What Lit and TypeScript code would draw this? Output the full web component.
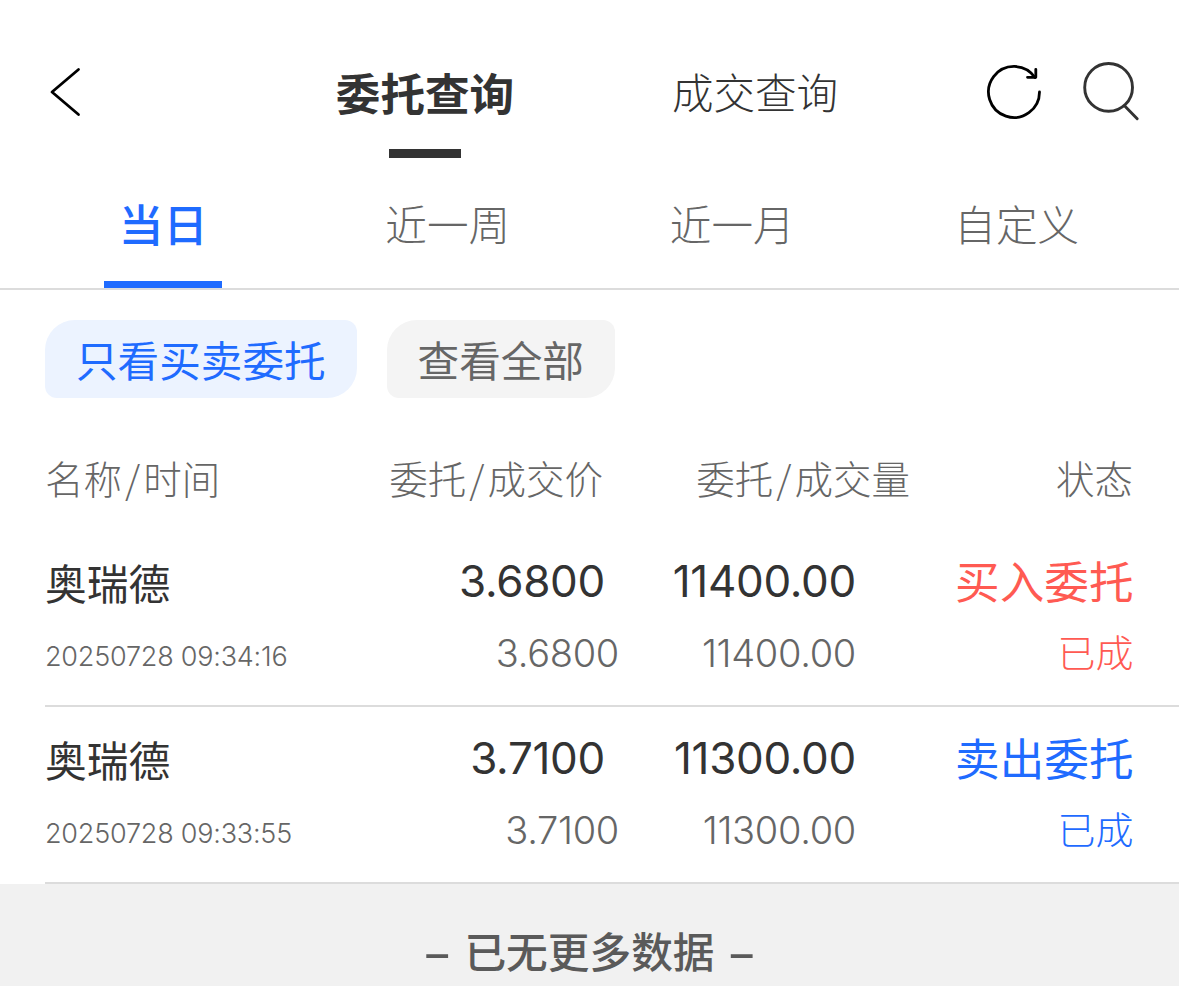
import { css, html, LitElement } from 'lit';
import { customElement, property, state } from 'lit/decorators.js';
import { classMap } from 'lit/directives/class-map.js';

interface Order {
  name: string;
  time: string;
  price: string;
  dealPrice: string;
  volume: string;
  dealVolume: string;
  side: 'buy' | 'sell';
  action: string;
  status: string;
}

const orders: Order[] = [
  {
    name: '奥瑞德',
    time: '20250728 09:34:16',
    price: '3.6800',
    dealPrice: '3.6800',
    volume: '11400.00',
    dealVolume: '11400.00',
    side: 'buy',
    action: '买入委托',
    status: '已成',
  },
  {
    name: '奥瑞德',
    time: '20250728 09:33:55',
    price: '3.7100',
    dealPrice: '3.7100',
    volume: '11300.00',
    dealVolume: '11300.00',
    side: 'sell',
    action: '卖出委托',
    status: '已成',
  },
];

@customElement('order-row')
export class OrderRow extends LitElement {
  @property({attribute: false}) order!: Order;

  static styles = css`
    :host {
      display: block;
      flex: none;
      box-sizing: border-box;
      height: 177px;
      margin-left: 45px;
      padding-top: 18px;
      border-bottom: 2px solid #dcdcdc;
      color: #333;
    }
    .line {
      display: grid;
      grid-template-columns: 328px 232px 251px 277.5px;
      white-space: nowrap;
    }
    .main {
      height: 66px;
      line-height: 66px;
    }
    .sub {
      height: 78px;
      line-height: 78px;
      color: #666;
    }
    .name {
      padding-top: 1px;
      font-size: 41.8px;
    }
    .time {
      padding-top: 4px;
      font-family: Inter, sans-serif;
      font-size: 27px;
      font-weight: 300;
      letter-spacing: -.22px;
    }
    .num {
      text-align: right;
      font-family: Inter, sans-serif;
      font-size: 44px;
      font-weight: 400;
      letter-spacing: -.3px;
    }
    .sub .num {
      font-size: 38px;
      font-weight: 300;
    }
    .sub .price {
      margin-right: -14px;
    }
    .state {
      text-align: right;
      font-size: 44.6px;
      line-height: 64px;
    }
    .sub .state {
      font-size: 38px;
      font-weight: 300;
      line-height: 74px;
    }
    .buy {
      color: #ff5a52;
    }
    .sell {
      color: #1f6bff;
    }
  `;

  render() {
    const o = this.order;
    const stateClass = classMap({state: true, [o.side]: true});
    return html`
      <div class="line main">
        <div class="name">${o.name}</div>
        <div class="num price">${o.price}</div>
        <div class="num volume">${o.volume}</div>
        <div class=${stateClass}>${o.action}</div>
      </div>
      <div class="line sub">
        <div class="time">${o.time}</div>
        <div class="num price">${o.dealPrice}</div>
        <div class="num volume">${o.dealVolume}</div>
        <div class=${stateClass}>${o.status}</div>
      </div>
    `;
  }
}

@customElement('app-root')
export class AppRoot extends LitElement {
  @state() range = '当日';

  @state() filter = '只看买卖委托';

  static styles = css`
    :host {
      display: flex;
      flex-direction: column;
      height: 986px;
      overflow: hidden;
      background: #fff;
      color: #333;
      font-family: 'Noto Sans CJK SC', sans-serif;
    }
    .top {
      flex: none;
      display: grid;
      grid-template-columns: 260px 330px 330px 1fr;
      height: 164px;
      box-sizing: border-box;
      padding-top: 56px;
    }
    svg {
      display: block;
      fill: none;
      stroke-linecap: round;
      stroke-linejoin: round;
    }
    .back {
      padding: 8px 0 0 48px;
    }
    .title {
      display: flex;
      flex-direction: column;
      align-items: center;
      line-height: 71px;
      font-size: 41.5px;
      font-weight: 300;
    }
    .title.active {
      font-size: 44.6px;
      font-weight: 700;
    }
    .title.active::after {
      content: '';
      width: 72px;
      height: 9px;
      margin-top: 22px;
      background: #333;
    }
    .tools {
      display: flex;
      gap: 36px;
      padding: 4px 0 0 64px;
    }
    .tabs {
      flex: none;
      display: grid;
      grid-template-columns: repeat(4, 1fr);
      height: 126px;
      box-sizing: border-box;
      padding: 0 20px 0 21px;
      border-bottom: 2px solid #dcdcdc;
    }
    .tab {
      display: flex;
      flex-direction: column;
      align-items: center;
      justify-content: space-between;
      line-height: 118px;
      height: 124px;
      font-size: 41.6px;
      font-weight: 300;
      color: #666;
    }
    .tab.active {
      line-height: 117px;
      font-size: 44.6px;
      font-weight: 500;
      color: #1f6bff;
    }
    .tab.active::after {
      content: '';
      width: 118px;
      height: 7px;
      background: #1f6bff;
    }
    .chips {
      flex: none;
      display: flex;
      gap: 30px;
      padding: 30px 45px 0;
    }
    .chip {
      height: 78px;
      box-sizing: border-box;
      padding: 0 31px;
      border-radius: 30px 12px 30px 12px;
      background: #f4f4f4;
      color: #666;
      font-size: 41.6px;
      line-height: 78px;
    }
    .chip.active {
      background: #ecf3ff;
      color: #1f6bff;
    }
    .head {
      flex: none;
      display: grid;
      grid-template-columns: 328px 230px 307px 223px;
      height: 132px;
      padding-left: 45px;
      box-sizing: border-box;
      padding-top: 40px;
      line-height: 78px;
      font-size: 38.5px;
      font-weight: 300;
      color: #666;
      text-align: right;
      white-space: nowrap;
    }
    .head .first {
      text-align: left;
    }
    .slash {
      padding: 0 3px;
    }
    .end {
      flex: 1 1 0;
      min-height: 0;
      display: flex;
      justify-content: center;
      gap: 14px;
      background: #f1f1f1;
      color: #5a5a5a;
      font-size: 41.7px;
      font-weight: 500;
      line-height: 132px;
    }
    .dash {
      font-size: 49px;
      line-height: 129px;
    }
  `;

  render() {
    return html`
      <div class="top">
        <div class="back">
          <svg width="36" height="56" viewBox="0 0 36 56" stroke="#000" stroke-width="2.8">
            <path d="M30.5 5.5 4 28 30.5 50.5" />
          </svg>
        </div>
        <div class="title active">委托查询</div>
        <div class="title">成交查询</div>
        <div class="tools">
          <svg width="60" height="62" viewBox="984 60 60 62" stroke="#000" stroke-width="2.8">
            <path d="M1039.5 92A25.5 25.5 0 1 1 1035 77.5" />
            <path d="M1035.8 69.3V77.3H1027.5" />
          </svg>
          <svg width="62" height="62" viewBox="1080 60 62 62" stroke="#333" stroke-width="2.9">
            <circle cx="1108.6" cy="87.4" r="23.9" />
            <path d="M1125 106.3 1137.2 118.8" />
          </svg>
        </div>
      </div>
      <div class="tabs">
        ${['当日', '近一周', '近一月', '自定义'].map(t => html`
          <div
            class=${classMap({tab: true, active: t === this.range})}
            @click=${() => this.range = t}
          >${t}</div>
        `)}
      </div>
      <div class="chips">
        ${['只看买卖委托', '查看全部'].map(c => html`
          <div
            class=${classMap({chip: true, active: c === this.filter})}
            @click=${() => this.filter = c}
          >${c}</div>
        `)}
      </div>
      <div class="head">
        <div class="first">名称<span class="slash">/</span>时间</div>
        <div>委托<span class="slash">/</span>成交价</div>
        <div>委托<span class="slash">/</span>成交量</div>
        <div>状态</div>
      </div>
      ${orders.map(o => html`<order-row .order=${o}></order-row>`)}
      <div class="end">
        <span class="dash">–</span>
        <span>已无更多数据</span>
        <span class="dash">–</span>
      </div>
    `;
  }
}
